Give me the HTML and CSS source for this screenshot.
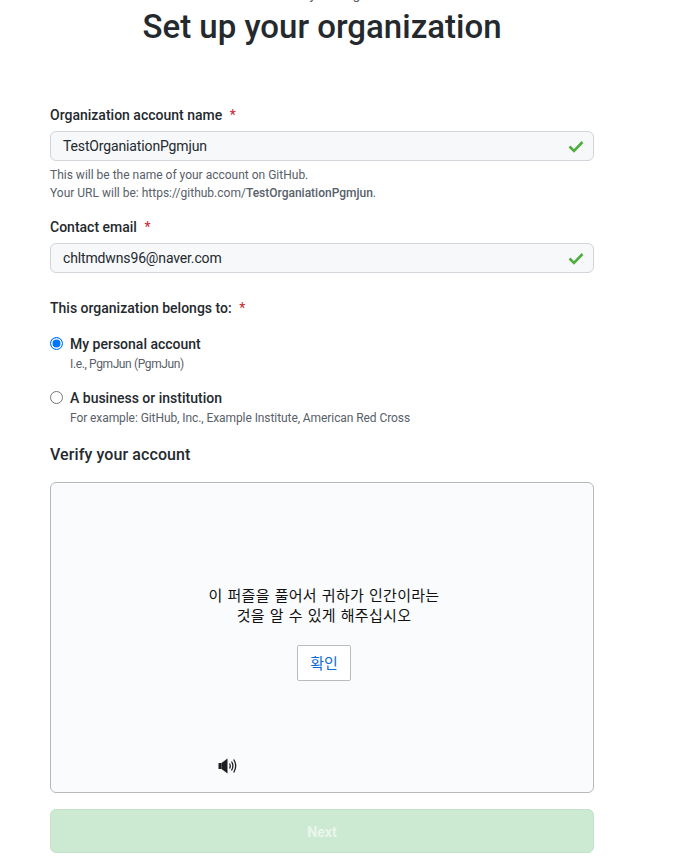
FILE: index.html
```html
<!DOCTYPE html>
<html lang="en">
<head>
<meta charset="utf-8">
<title>Set up your organization</title>
<link rel="stylesheet" href="styles.css">
</head>
<body>
<main class="page">
  <p class="crumb">Tell us about your organization</p>
  <h1 class="title">Set up your organization</h1>
  <form class="form">
    <div class="field field-name">
      <label class="label">Organization account name <span class="req">*</span></label>
      <div class="input"><span>TestOrganiationPgmjun</span>
        <svg class="check" viewBox="0 0 16 16" width="16" height="16"><path d="M1.5 8.5 6 13 14.5 4" fill="none" stroke="#4fad3e" stroke-width="2.6"/></svg>
      </div>
      <p class="note">This will be the name of your account on GitHub.<br>Your URL will be: https://github.com/<b>TestOrganiationPgmjun</b>.</p>
    </div>
    <div class="field field-email">
      <label class="label">Contact email <span class="req">*</span></label>
      <div class="input"><span>chltmdwns96@naver.com</span>
        <svg class="check" viewBox="0 0 16 16" width="16" height="16"><path d="M1.5 8.5 6 13 14.5 4" fill="none" stroke="#4fad3e" stroke-width="2.6"/></svg>
      </div>
    </div>
    <div class="label belongs">This organization belongs to: <span class="req">*</span></div>
    <div class="radio radio-first">
      <span class="dot dot-on"></span>
      <div><div class="radio-title">My personal account</div><div class="radio-note radio-note-tight">I.e., PgmJun (PgmJun)</div></div>
    </div>
    <div class="radio radio-second">
      <span class="dot"></span>
      <div><div class="radio-title">A business or institution</div><div class="radio-note">For example: GitHub, Inc., Example Institute, American Red Cross</div></div>
    </div>
    <h2 class="verify">Verify your account</h2>
    <section class="captcha">
      <div class="puzzle">
        <p class="puzzle-text">이 퍼즐을 풀어서 귀하가 인간이라는<br>것을 알 수 있게 해주십시오</p>
        <div class="confirm">확인</div>
      </div>
      <svg class="sound" viewBox="0 0 20 16" width="20" height="16">
        <rect x="0.5" y="5" width="3" height="6" fill="#1b1f23"/>
        <path d="M3.5 5 9.5 0.5v15L3.5 11z" fill="#1b1f23"/>
        <path d="M11.5 5.5q1.6 2.5 0 5M13.5 3.5q2.8 4.5 0 9M15.7 1.5q4 6.5 0 13" fill="none" stroke="#1b1f23" stroke-width="1.3"/>
      </svg>
    </section>
    <div class="next">Next</div>
  </form>
</main>
</body>
</html>
```
FILE: styles.css
```css
* { box-sizing: border-box; }
html, body { margin: 0; padding: 0; background: #fff; }
body {
  width: 684px;
  height: 866px;
  overflow: hidden;
  font-family: Roboto, "Noto Sans", "Noto Sans CJK KR", sans-serif;
  color: #24292e;
}
.page { width: 544px; margin-left: 50px; }
.crumb {
  margin: -16px 0 0;
  height: 20px;
  font-size: 14px;
  line-height: 20px;
  text-align: center;
  color: #586069;
}
.title {
  margin: -1px 0 0;
  height: 48px;
  font-size: 33px;
  line-height: 48px;
  font-weight: 500;
  text-align: center;
}
.form { display: block; padding-top: 54px; }
.label {
  display: block;
  font-size: 14px;
  font-weight: 500;
  line-height: 20px;
  height: 20px;
}
.req { color: #cb2431; margin-left: 4px; font-weight: 400; }
.input {
  display: flex;
  align-items: center;
  justify-content: space-between;
  height: 30px;
  margin-top: 6px;
  padding: 0 9px 0 12px;
  background: #f6f8fa;
  border: 1px solid #d1d5da;
  border-radius: 6px;
  font-size: 14px;
  letter-spacing: -0.14px;
}
.note {
  margin: 5px 0 0;
  font-size: 12px;
  line-height: 18px;
  color: #586069;
}
.note b { font-weight: 500; }
.field-email { margin-top: 15px; }
.belongs { margin-top: 25px; }
.radio { display: flex; gap: 7px; }
.radio-first { margin-top: 16px; }
.radio-second { margin-top: 14px; }
.dot {
  flex: none;
  width: 13px;
  height: 13px;
  margin-top: 3px;
  border: 1px solid #767676;
  border-radius: 50%;
  background: #fff;
}
.dot-on {
  border: 1.5px solid #0075ff;
  background: #0075ff;
  box-shadow: inset 0 0 0 1.5px #fff;
}
.radio-title { font-size: 14px; font-weight: 500; line-height: 20px; }
.radio-note { font-size: 12px; line-height: 20px; color: #586069; letter-spacing: -0.08px; }
.radio-note-tight { letter-spacing: -0.38px; }
.verify {
  margin: 15px 0 0;
  font-size: 16px;
  font-weight: 500;
  line-height: 24px;
  letter-spacing: 0.1px;
}
.captcha {
  position: relative;
  height: 311px;
  margin-top: 15px;
  background: #fafbfd;
  border: 1px solid #b8b8b8;
  border-radius: 6px;
}
.puzzle { padding: 102px 0 0 4px; width: 542px; }
.puzzle-text {
  margin: 0;
  font-family: "Noto Sans CJK KR", sans-serif;
  font-size: 15px;
  letter-spacing: 0.3px;
  word-spacing: 1.2px;
  line-height: 20px;
  text-align: center;
  color: #111;
}
.confirm {
  width: 54px;
  height: 36px;
  margin: 20px auto 0;
  border: 1px solid #b8bcc0;
  border-radius: 2px;
  background: #fff;
  color: #0b6bd6;
  font-family: "Noto Sans CJK KR", sans-serif;
  font-size: 15px;
  line-height: 33px;
  text-align: center;
}
.sound { position: absolute; left: 167px; top: 275px; }
.next {
  height: 44px;
  margin-top: 16px;
  background: #cce9d1;
  border: 1px solid #c3e2ca;
  border-radius: 6px;
  color: #e9f6ec;
  font-size: 14px;
  font-weight: 700;
  line-height: 44px;
  text-align: center;
}
```
